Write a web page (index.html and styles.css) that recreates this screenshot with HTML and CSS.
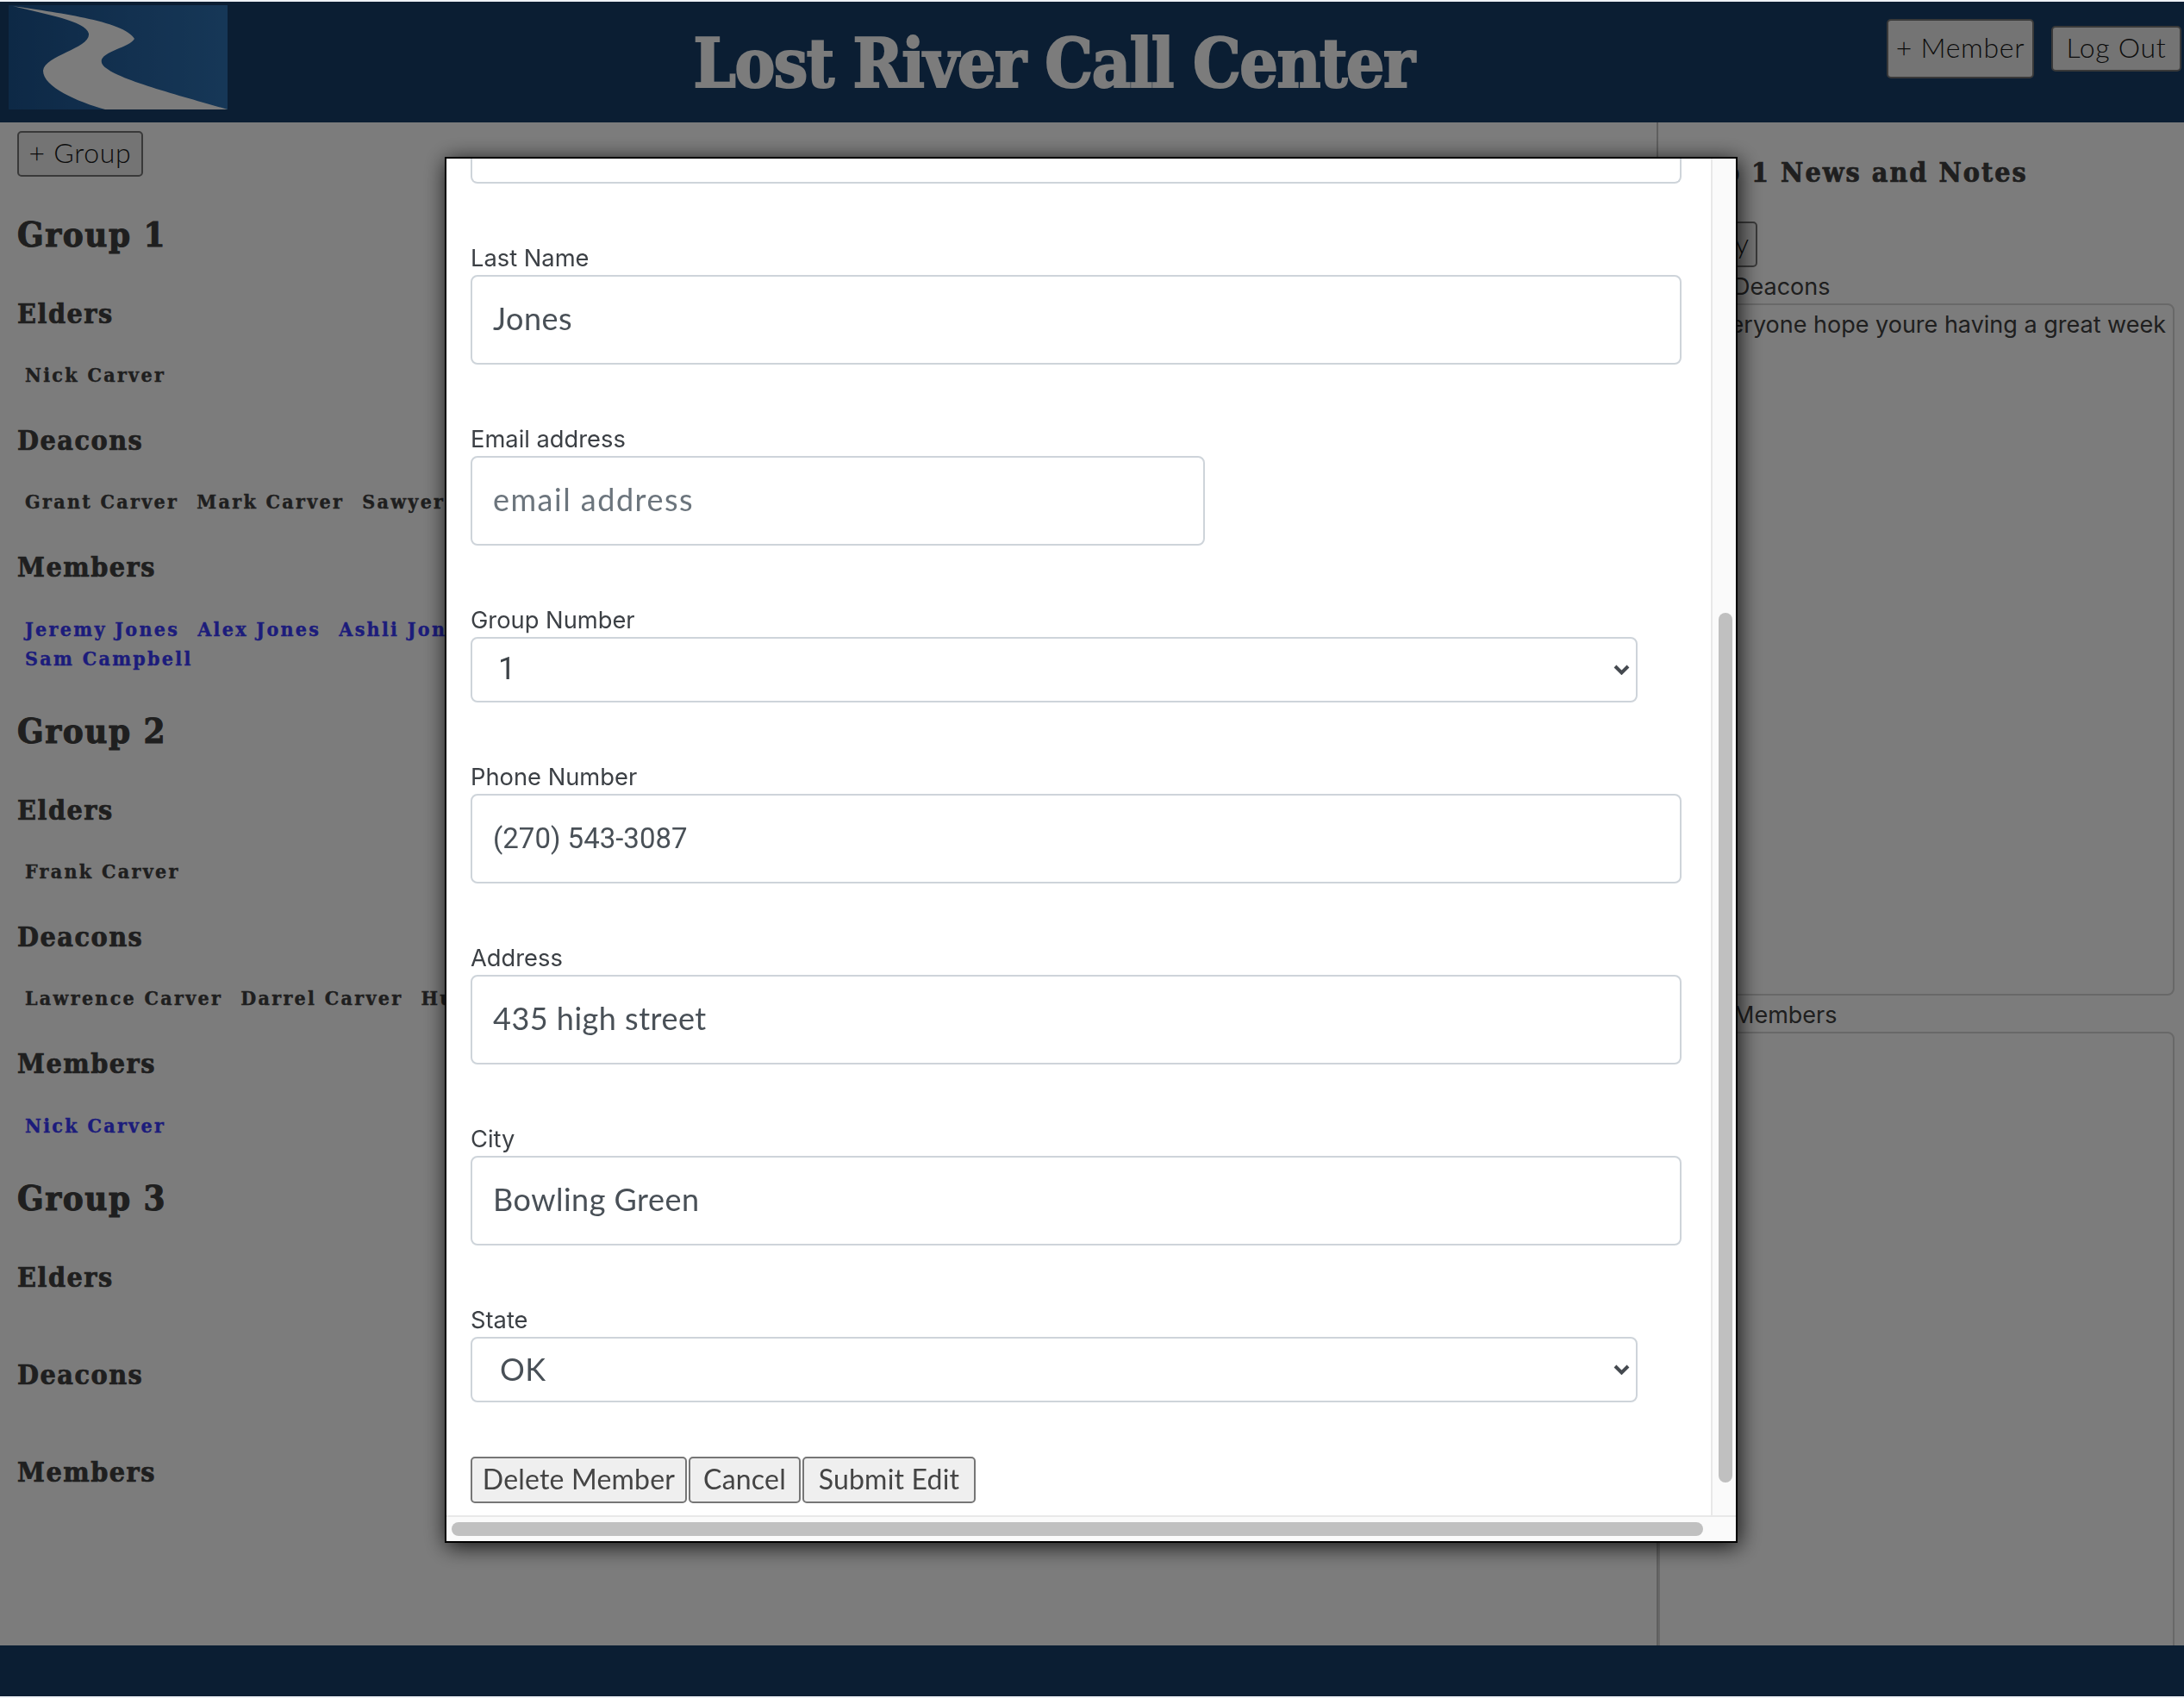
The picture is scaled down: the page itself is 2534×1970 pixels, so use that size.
FILE: index.html
```html
<!DOCTYPE html>
<html lang="en">
<head>
<meta charset="utf-8">
<title>Lost River Call Center</title>
<link rel="stylesheet" href="styles.css">
</head>
<body>
<div class="app">
  <header class="topbar">
    <svg class="logo" viewBox="0 0 254 121" aria-hidden="true">
      <defs><linearGradient id="sky" x1="0" x2="1" y1="0" y2="0"><stop offset="0" stop-color="#1c5590"/><stop offset="1" stop-color="#2f72b4"/></linearGradient></defs>
      <rect width="254" height="121" fill="url(#sky)"/>
      <path fill="#fff" d="M5 1C50 8 135 18 146 39C140 50 100 55 109 69C120 85 200 105 254 121L112 121C80 112 40 95 40 76C42 58 95 50 93 33C90 18 40 10 5 1Z"/>
    </svg>
    <h1 class="title">Lost River Call Center</h1>
    <div class="top-actions">
      <button class="btn btn-member">+ Member</button>
      <button class="btn btn-logout">Log Out</button>
    </div>
  </header>
  <main class="main">
    <aside class="groups">
      <button class="btn btn-group">+ Group</button>
      <h2>Group 1</h2>
      <h3>Elders</h3>
      <div class="names"><span>Nick Carver</span></div>
      <h3>Deacons</h3>
      <div class="names"><span>Grant Carver</span><span>Mark Carver</span><span>Sawyer Carver</span></div>
      <h3>Members</h3>
      <div class="names members"><span>Jeremy Jones</span><span>Alex Jones</span><span>Ashli Jones</span></div>
      <div class="names members tight"><span>Sam Campbell</span></div>
      <h2>Group 2</h2>
      <h3>Elders</h3>
      <div class="names"><span>Frank Carver</span></div>
      <h3>Deacons</h3>
      <div class="names"><span>Lawrence Carver</span><span>Darrel Carver</span><span>Hunter Carver</span></div>
      <h3>Members</h3>
      <div class="names members"><span>Nick Carver</span></div>
      <h2>Group 3</h2>
      <h3>Elders</h3>
      <div class="names"></div>
      <h3>Deacons</h3>
      <div class="names"></div>
      <h3>Members</h3>
      <div class="names"></div>
    </aside>
    <section class="news">
      <h2 class="news-title">Group 1 News and Notes</h2>
      <button class="btn btn-modify">Modify</button>
      <label class="news-label">Deacons</label>
      <div class="note note-top">Everyone hope youre having a great week</div>
      <label class="news-label">Members</label>
      <div class="note note-bottom"></div>
    </section>
  </main>
  <footer class="footer"></footer>
</div>
<div class="overlay"></div>
<div class="modal">
  <form class="modal-form">
    <div class="stub"></div>
    <div class="field field-first"><label>Last Name</label><input class="control" value="Jones"></div>
    <div class="field"><label>Email address</label><input class="control control-email" placeholder="email address"></div>
    <div class="field"><label>Group Number</label><select class="control control-select control-digit"><option>1</option></select></div>
    <div class="field"><label>Phone Number</label><input class="control control-num" value="(270) 543-3087"></div>
    <div class="field"><label>Address</label><input class="control" value="435 high street"></div>
    <div class="field"><label>City</label><input class="control" value="Bowling Green"></div>
    <div class="field"><label>State</label><select class="control control-select"><option>OK</option></select></div>
    <div class="form-actions">
      <button type="button" class="form-btn form-btn-delete">Delete Member</button>
      <button type="button" class="form-btn form-btn-cancel">Cancel</button>
      <button type="button" class="form-btn form-btn-submit">Submit Edit</button>
    </div>
  </form>
  <div class="track-v"><div class="thumb-v"></div></div>
  <div class="track-h"><div class="thumb-h"></div></div>
</div>
</body>
</html>
```
FILE: styles.css
```css
* { box-sizing: border-box; }
html, body { margin: 0; height: 100%; }
body { background: #eef2f6; overflow: hidden; font-family: "Inter", "Liberation Sans", sans-serif; }

.app { margin-top: 2px; height: 1966px; display: flex; flex-direction: column; background: #fff; }

.topbar { height: 140px; background: #173e69; display: flex; align-items: flex-start; flex: none; }
.logo { width: 254px; height: 121px; margin: 4px 0 0 10px; flex: none; }
.title { flex: 1; margin: 21px 8px 0 0; text-align: center; color: #fff; font: 700 78px/1.3 "DejaVu Serif", serif; font-stretch: condensed; -webkit-text-stroke: 2px #fff; letter-spacing: -1.5px; white-space: nowrap; }
.top-actions { display: flex; align-items: flex-start; flex: none; margin-right: 3px; }

.btn { font: 300 32px/1 "Lato", sans-serif; letter-spacing: 0.7px; background: #efefef; color: #1a1a1a; border: 2px solid #767676; border-radius: 5px; padding: 0 0 4px; }
.btn-member { width: 171px; height: 69px; margin-top: 20px; }
.btn-logout { width: 151px; height: 53px; margin: 28px 0 0 20px; }
.btn-group { width: 146px; height: 53px; display: block; }

.main { flex: 1; display: flex; min-height: 0; }
.groups { width: 1922px; flex: none; padding: 10px 0 0 20px; overflow: hidden; color: #404040; }
.groups h2 { font: 700 40px/48px "DejaVu Serif", serif; font-stretch: condensed; -webkit-text-stroke: 1px #404040; letter-spacing: 1.5px; margin: 43px 0 48px; }
.groups h3 { font: 700 32px/40px "DejaVu Serif", serif; font-stretch: condensed; -webkit-text-stroke: 0.7px #404040; letter-spacing: 1.5px; margin: 39px 0 0; }
.groups h2 + h3 { margin-top: 0; }
.names { display: flex; gap: 21px; margin-top: 34px; padding-left: 9px; font: 700 23px/34px "DejaVu Serif", serif; font-stretch: condensed; -webkit-text-stroke: 0.4px currentColor; letter-spacing: 2.3px; white-space: nowrap; }
.members { color: #3a3afc; margin-top: 35px; }
.names.tight { margin-top: 0; }

.news { flex: 1; border-left: 2px solid #c4c4c4; min-width: 0; color: #404040; }
.news-title { font: 700 32px/40px "DejaVu Serif", serif; font-stretch: condensed; -webkit-text-stroke: 0.7px #404040; letter-spacing: 2px; margin: 38px 0 0 -14px; white-space: nowrap; }
.btn-modify { display: block; width: 115px; height: 53px; margin: 37px 0 0 0; padding-right: 6px; }
.news-label { display: block; font-size: 27px; line-height: 34px; padding-left: 87px; margin-top: 6px; }
.note { margin: 2px 0 0 0; width: 599px; border: 2px solid #d5d5d5; border-radius: 8px; padding: 3px 8px 4px; font-size: 27px; line-height: 40px; text-align: right; white-space: nowrap; }
.note-top { height: 803px; }
.note-bottom { height: 760px; margin-bottom: -100px; }

.footer { height: 59px; flex: none; background: #173e69; position: relative; }

.overlay { position: fixed; left: 0; right: 0; top: 2px; bottom: 2px; background: rgba(0, 0, 0, 0.515); }

.modal { position: fixed; left: 516px; top: 182px; width: 1500px; height: 1608px; background: #fff; border: 2px solid #000; box-shadow: 2px 4px 24px rgba(0, 0, 0, 0.85); overflow: hidden; }
.modal-form { padding: 0 0 0 28px; color: #3c4045; }
.stub { width: 1405px; height: 29px; border: 2px solid #ced4da; border-top: 0; border-radius: 0 0 8px 8px; }
.field { margin-top: 70px; }
.field label { display: block; font-size: 27.3px; line-height: 34px; margin-bottom: 2px; }
.control { display: block; width: 1405px; height: 104px; padding: 0 24px 4px; font: 400 36px "Lato", sans-serif; letter-spacing: 0.5px; color: #495057; background: #fff; border: 2px solid #ced4da; border-radius: 8px; outline: 0; }
.control::placeholder { color: #6c757d; opacity: 1; }
.control-email { width: 852px; letter-spacing: 1.5px; }
.control-select { width: 1354px; height: 76px; padding: 0 32px 2px; appearance: none; background: #fff url("data:image/svg+xml,%3Csvg xmlns='http://www.w3.org/2000/svg' viewBox='0 0 19 12'%3E%3Cpath d='M2 2l7.5 7.5L17 2' fill='none' stroke='%23454a50' stroke-width='4'/%3E%3C/svg%3E") no-repeat right 7px center / 19px 12px; }
.control-digit { font-family: "Roboto", sans-serif; padding-left: 30px; color: #3c4247; }
.control-num { font-family: "Roboto", sans-serif; font-size: 33px; letter-spacing: 0; padding-bottom: 2px; }
.form-actions { display: flex; gap: 2px; margin-top: 63px; }
.form-btn { font: 400 32px/1 "Lato", sans-serif; letter-spacing: 0.2px; height: 54px; padding: 0 0 3px; background: #efefef; color: #444; border: 2px solid #767676; border-radius: 5px; }
.form-btn-delete { width: 251px; }
.form-btn-cancel { width: 130px; }
.form-btn-submit { width: 201px; }

.track-v { position: absolute; top: 0; right: 0; bottom: 30px; width: 29px; background: #fafafa; border-left: 2px solid #e8e8e8; }
.thumb-v { position: absolute; top: 527px; left: 7px; width: 16px; height: 1009px; background: #c0c0c0; border-radius: 8px; }
.track-h { position: absolute; left: 0; right: 0; bottom: 0; height: 30px; background: #fafafa; border-top: 2px solid #e8e8e8; }
.thumb-h { position: absolute; left: 6px; top: 6px; width: 1452px; height: 16px; background: #c0c0c0; border-radius: 8px; }
```
